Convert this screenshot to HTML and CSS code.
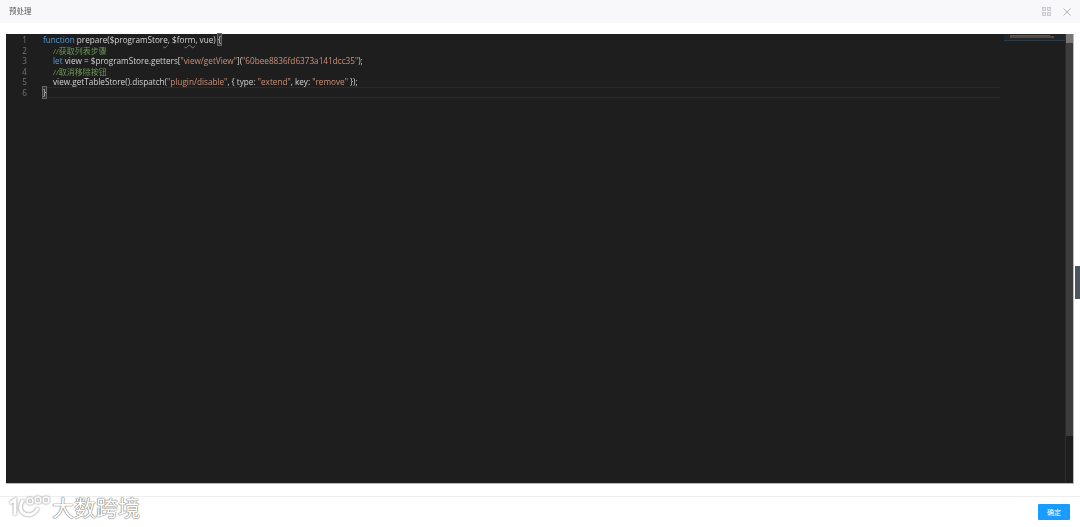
FILE: index.html
```html
<!DOCTYPE html>
<html lang="zh">
<head>
<meta charset="utf-8">
<title>预处理</title>
<link rel="stylesheet" href="styles.css">
</head>
<body>
<div class="dialog">
  <header class="head">
    <span class="title">预处理</span>
    <div class="head-icons">
      <svg class="icon" viewBox="0 0 9 9" width="9" height="9"><rect width="4" height="4" fill="#c9cbcf"/><rect x="5" width="4" height="4" fill="#c9cbcf"/><rect y="5" width="4" height="4" fill="#c9cbcf"/><rect x="5" y="5" width="4" height="4" fill="#c9cbcf"/><rect x="1" y="1" width="2" height="2" fill="#e6e7ea"/><rect x="6" y="1" width="2" height="2" fill="#e6e7ea"/><rect x="1" y="6" width="2" height="2" fill="#e6e7ea"/><rect x="6" y="6" width="2" height="2" fill="#e6e7ea"/></svg>
      <svg class="icon" viewBox="0 0 8 8" width="8" height="8"><path d="M.5.5l7 7M7.500.5l-7 7" stroke="#a9acb1" stroke-width=".9" fill="none"/></svg>
    </div>
  </header>
  <main class="body">
    <div class="editor">
      <div class="gutter">
        <span>1</span><span>2</span><span>3</span><span>4</span><span>5</span><span>6</span>
      </div>
      <div class="code">
        <div class="line"><span class="kw">function</span> prepare($programStor<span class="sq">e</span>, $fo<span class="sq">rm</span>, vue) <span class="match">{</span></div>
        <div class="line ind"><span class="cm">//获取列表步骤</span></div>
        <div class="line ind"><span class="kw">let</span> view = $programStore.getters[<span class="st">"view/getView"</span>](<span class="st">"60bee8836fd6373a141dcc35"</span>);</div>
        <div class="line ind"><span class="cm">//取消移除按钮</span></div>
        <div class="line ind">view.getTableStore().dispatch(<span class="st">"plugin/disable"</span>, { type: <span class="st">"extend"</span>, key: <span class="st">"remove"</span> });</div>
        <div class="line cur"><span class="match">}</span></div>
      </div>
      <div class="minimap"><div class="mini-a"></div><div class="mini-b"></div><div class="mini-c"></div></div>
      <div class="scrollbar"><div class="thumb"></div></div>
    </div>
  </main>
  <footer class="foot">
    <button class="ok">确定</button>
  </footer>
</div>
<div class="side-tab"></div>
<div class="watermark">
  <svg class="wm-logo" viewBox="0 0 44 24" width="44" height="24"><path d="M2 8l5-3v15M15 5c-4 6-3 12 2 14 6 2 11-1 13-6" fill="none" stroke="#fff" stroke-width="3"/><circle cx="22" cy="6" r="3" fill="none" stroke="#fff" stroke-width="1.500"/><circle cx="30" cy="5" r="3" fill="none" stroke="#fff" stroke-width="1.500"/><circle cx="38" cy="5" r="3" fill="none" stroke="#fff" stroke-width="1.500"/></svg>
  <span class="wm-text">大数跨境</span>
</div>
</body>
</html>
```
FILE: styles.css
```css
* { box-sizing: border-box; }
html, body { margin: 0; height: 100%; overflow: hidden; background: #fff; }
body { font-family: "Liberation Sans", "Noto Sans CJK SC", sans-serif; position: relative; }
.dialog { display: flex; flex-direction: column; height: 527px; }
.head { height: 23px; flex: none; display: flex; align-items: center; justify-content: space-between; padding: 0 9px 2px 9px; background: #f8f8fb; }
.title { font-size: 7.500px; color: #555; filter: blur(.3px); }
.head-icons { display: flex; gap: 12px; align-items: center; padding-top: 2px; }
.icon { display: block; }
.body { flex: none; height: 474px; padding: 11px 6px 12px; border-bottom: 1px solid #eeeef0; }
.editor { display: flex; height: 450px; background: #1e1e1e; border-bottom: 1px solid #bbb; border-right: 1px solid #bbb; position: relative; }
.gutter { width: 37px; flex: none; display: flex; flex-direction: column; padding-top: 1px; filter: blur(.3px); }
.gutter span { height: 10.600px; line-height: 10.600px; font-size: 8.200px; color: #6e7681; text-align: right; padding-right: 16px; font-family: "Open Sans", sans-serif; }
.code { flex: 1; padding-top: 1px; font-family: "Open Sans", "Noto Sans CJK SC", sans-serif; font-size: 8.200px; color: #d4d4d4; filter: blur(.3px); }
.line { height: 10.600px; line-height: 10.600px; white-space: pre; }
.ind { padding-left: 10px; }
.cur { margin-top: -1px; height: 11px; border-top: 1px solid #2a2a2a; border-bottom: 1px solid #2a2a2a; width: 957px; line-height: 10px; }
.kw { color: #569cd6; }
.cm { color: #6a9955; font-size: 8px; }
.st { color: #ce9178; }
.sq { text-decoration: underline wavy #777 .5px; }
.match { outline: 1px solid #666; background: #333639; }
.minimap { position: absolute; left: 998px; top: 0; width: 61px; height: 7px; background: #232527; padding-top: 1px; }
.mini-a { height: 1px; width: 40px; margin-left: 6px; background: #4e5a52; }
.mini-b { height: 2px; width: 44px; margin-left: 6px; background: #54483f; }
.mini-c { height: 1px; margin-top: 2px; background: #2a3d4c; }
.scrollbar { width: 8px; flex: none; background: #1e1e1e; border-left: 1px solid #2d2d2d; position: relative; }
.thumb { height: 402px; background: #3c3c3c; border-top: 9px solid #767676; }
.foot { flex: 1; display: flex; justify-content: flex-end; align-items: center; padding: 0 10px; }
.ok { width: 32px; height: 16px; padding: 0; border: 0; border-radius: 1px; background: #1a9cff; color: #fff; font-size: 7px; font-family: inherit; }
.side-tab { position: absolute; right: 0; top: 266px; width: 5px; height: 33px; background: #4a5560; }
.watermark { position: absolute; left: 8px; top: 492px; display: flex; align-items: center; gap: 0; }
.wm-logo { filter: drop-shadow(0 0 1px #777); margin-top: 2px; }
.wm-text { font-size: 22px; color: #fff; text-shadow: 0 0 1px #777, 0 0 1px #777, 0 0 1px #777; font-family: "Noto Sans CJK SC", sans-serif; line-height: 28px; }
```
